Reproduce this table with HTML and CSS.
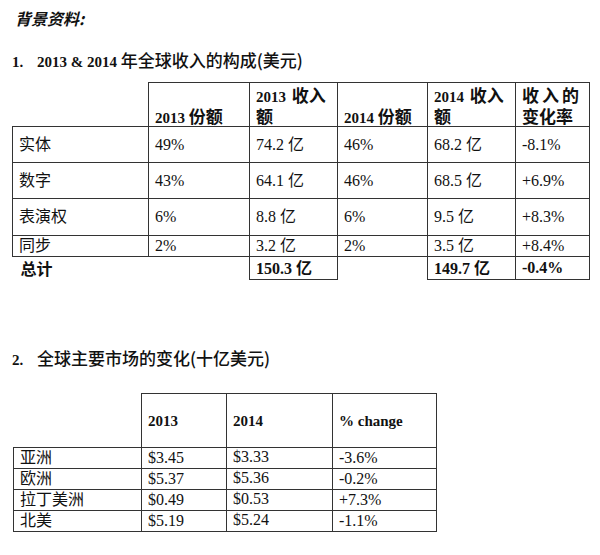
FILE: index.html
```html
<!DOCTYPE html>
<html lang="zh">
<head>
<meta charset="utf-8">
<link rel="stylesheet" href="styles.css">
</head>
<body>
<div class="page">
  <p class="title">背景资料:</p>
  <h2 class="heading h1"><span class="num">1.</span>2013 &amp; 2014 <span class="zh">年全球收入的构成(美元)</span></h2>
  <table class="t1">
    <colgroup>
      <col class="c136"><col class="c101"><col class="c88"><col class="c90"><col class="c88"><col class="c74">
    </colgroup>
    <tr class="hdr">
      <td class="blank"></td>
      <th><div class="ln">2013 <span class="zh">份额</span></div></th>
      <th><div class="ln spread">2013 <span class="zh">收入</span></div><div class="ln"><span class="zh">额</span></div></th>
      <th><div class="ln">2014 <span class="zh">份额</span></div></th>
      <th><div class="ln spread">2014 <span class="zh">收入</span></div><div class="ln"><span class="zh">额</span></div></th>
      <th class="rate"><div class="ln"><span class="zh ls">收入的</span></div><div class="ln"><span class="zh">变化率</span></div></th>
    </tr>
    <tr class="r36"><td>实体</td><td>49%</td><td>74.2 亿</td><td>46%</td><td>68.2 亿</td><td>-8.1%</td></tr>
    <tr class="r36"><td>数字</td><td>43%</td><td>64.1 亿</td><td>46%</td><td>68.5 亿</td><td>+6.9%</td></tr>
    <tr class="r37"><td>表演权</td><td>6%</td><td>8.8 亿</td><td>6%</td><td>9.5 亿</td><td>+8.3%</td></tr>
    <tr class="r21"><td>同步</td><td>2%</td><td>3.2 亿</td><td>2%</td><td>3.5 亿</td><td>+8.4%</td></tr>
    <tr class="total">
      <td class="blank tl">总计</td>
      <td class="blank"></td>
      <td class="b">150.3 <span class="zh">亿</span></td>
      <td class="blank"></td>
      <td class="b">149.7 <span class="zh">亿</span></td>
      <td class="b">-0.4%</td>
    </tr>
  </table>
  <h2 class="heading h2"><span class="num">2.</span><span class="zh">全球主要市场的变化(十亿美元)</span></h2>
  <table class="t2">
    <colgroup>
      <col class="c128"><col class="c85"><col class="c106"><col class="c104">
    </colgroup>
    <tr class="hdr2">
      <td class="blank"></td>
      <th>2013</th>
      <th>2014</th>
      <th>% change</th>
    </tr>
    <tr><td>亚洲</td><td>$3.45</td><td class="up">$3.33</td><td>-3.6%</td></tr>
    <tr><td>欧洲</td><td>$5.37</td><td class="up">$5.36</td><td>-0.2%</td></tr>
    <tr><td>拉丁美洲</td><td>$0.49</td><td class="up">$0.53</td><td>+7.3%</td></tr>
    <tr><td>北美</td><td>$5.19</td><td class="up">$5.24</td><td>-1.1%</td></tr>
  </table>
</div>
</body>
</html>
```

FILE: styles.css
```css
html, body {
  margin: 0;
  padding: 0;
  background: #fff;
}
body {
  font-family: "Liberation Serif", "Noto Sans CJK SC", serif;
  color: #111;
  font-size: 16px;
}
.page {
  padding: 8px 12px 0 12px;
  width: 600px;
  box-sizing: border-box;
}
.title {
  margin: 0 0 0 3px;
  font-size: 16px;
  line-height: 20px;
  font-style: italic;
  font-weight: bold;
  font-family: "Noto Sans CJK SC", sans-serif;
}
.heading {
  margin: 0;
  font-size: 15px;
  line-height: 20px;
  font-weight: bold;
}
.heading .num {
  display: inline-block;
  width: 25px;
}
.zh {
  font-family: "Noto Sans CJK SC", sans-serif;
  font-size: 16px;
}
.h1 {
  margin-top: 22px;
}
.h1 .zh, .h2 .zh {
  font-weight: 500;
  font-size: 17px;
}
.h2 {
  margin-top: 68px;
}
table {
  border-collapse: collapse;
  table-layout: fixed;
}
td, th {
  border: 1px solid #333;
  padding: 0 0 0 6px;
  text-align: left;
  vertical-align: middle;
  font-weight: normal;
  font-size: 16px;
  line-height: 20px;
  white-space: nowrap;
}
td {
  font-family: "Liberation Serif", "Noto Sans CJK SC", serif;
}
th {
  font-weight: bold;
  font-size: 15px;
  vertical-align: bottom;
  padding-bottom: 0;
}
th .zh {
  font-weight: bold;
  font-size: 17px;
}
.ln {
  height: 21px;
  line-height: 21px;
  overflow: visible;
}
.spread {
  word-spacing: 2px;
}
.ls {
  letter-spacing: 3px;
}
.t1 {
  width: 577px;
  margin-top: 10px;
}
.c136 { width: 136px; }
.c101 { width: 101px; }
.c88 { width: 88px; }
.c90 { width: 90px; }
.c74 { width: 74px; }
.c128 { width: 128px; }
.c85 { width: 85px; }
.c106 { width: 106px; }
.c104 { width: 104px; }
.hdr { height: 44px; }
.r36 { height: 36px; }
.r37 { height: 37px; }
.r21 { height: 21px; }
.total { height: 22px; }
.blank {
  border: none;
}
.tl {
  font-family: "Noto Sans CJK SC", sans-serif;
  font-weight: bold;
  padding-left: 8px;
}
.b {
  font-weight: bold;
}
.t2 {
  width: 424px;
  margin-top: 23px;
  margin-left: 1px;
}
.hdr2 { height: 54px; }
.hdr2 th {
  vertical-align: middle;
}
.t2 tr:not(.hdr2) { height: 21px; }
.t2 td {
  line-height: 18px;
}
.t2 td.up {
  vertical-align: top;
}
```
